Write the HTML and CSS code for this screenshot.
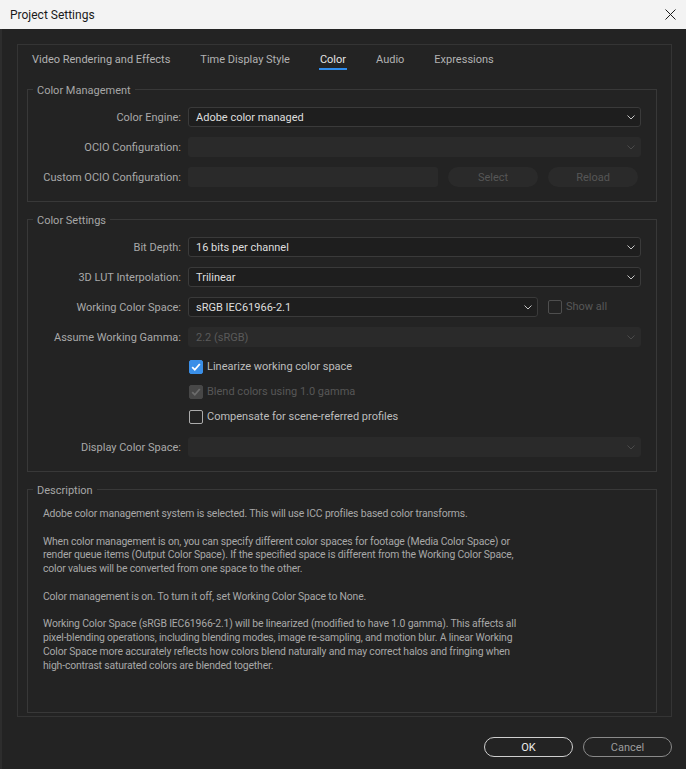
FILE: index.html
```html
<!DOCTYPE html>
<html>
<head>
<meta charset="utf-8">
<title>Project Settings</title>
<link rel="stylesheet" href="styles.css">
</head>
<body>
<div class="titlebar">
  <span class="title">Project Settings</span>
  <svg class="close" viewBox="0 0 11 11" width="11" height="11"><path d="M0.5 0.5 L10.5 10.5 M10.5 0.5 L0.5 10.5" stroke="#1b1b1b" stroke-width="1" fill="none"/></svg>
</div>
<div class="main">
  <div class="panel">
    <div class="tabs">
      <span class="tab">Video Rendering and Effects</span>
      <span class="tab">Time Display Style</span>
      <span class="tab active">Color</span>
      <span class="tab">Audio</span>
      <span class="tab">Expressions</span>
    </div>

    <fieldset class="group g1">
      <legend>Color Management</legend>
      <div class="rows">
        <div class="row">
          <span class="lbl">Color Engine:</span>
          <div class="select"><span>Adobe color managed</span><svg class="chev" viewBox="0 0 8 5" width="8" height="5"><polyline points="0.5,0.5 4,4 7.5,0.5" fill="none" stroke="#c6c6c6" stroke-width="1"/></svg></div>
        </div>
        <div class="row">
          <span class="lbl">OCIO Configuration:</span>
          <div class="select disabled"><span></span><svg class="chev" viewBox="0 0 8 5" width="8" height="5"><polyline points="0.5,0.5 4,4 7.5,0.5" fill="none" stroke="#4a4a4a" stroke-width="1"/></svg></div>
        </div>
        <div class="row">
          <span class="lbl">Custom OCIO Configuration:</span>
          <div class="ctrl-line">
            <div class="input disabled"></div>
            <span class="pill">Select</span>
            <span class="pill">Reload</span>
          </div>
        </div>
      </div>
    </fieldset>

    <fieldset class="group g2">
      <legend>Color Settings</legend>
      <div class="rows">
        <div class="row">
          <span class="lbl">Bit Depth:</span>
          <div class="select"><span>16 bits per channel</span><svg class="chev" viewBox="0 0 8 5" width="8" height="5"><polyline points="0.5,0.5 4,4 7.5,0.5" fill="none" stroke="#c6c6c6" stroke-width="1"/></svg></div>
        </div>
        <div class="row">
          <span class="lbl">3D LUT Interpolation:</span>
          <div class="select"><span>Trilinear</span><svg class="chev" viewBox="0 0 8 5" width="8" height="5"><polyline points="0.5,0.5 4,4 7.5,0.5" fill="none" stroke="#c6c6c6" stroke-width="1"/></svg></div>
        </div>
        <div class="row">
          <span class="lbl">Working Color Space:</span>
          <div class="ctrl-line">
            <div class="select wcs"><span>sRGB IEC61966-2.1</span><svg class="chev" viewBox="0 0 8 5" width="8" height="5"><polyline points="0.5,0.5 4,4 7.5,0.5" fill="none" stroke="#c6c6c6" stroke-width="1"/></svg></div>
            <span class="check-inline"><span class="cb dim"></span><span class="cb-text dimtext">Show all</span></span>
          </div>
        </div>
        <div class="row">
          <span class="lbl">Assume Working Gamma:</span>
          <div class="select disabled"><span class="dimtext">2.2 (sRGB)</span><svg class="chev" viewBox="0 0 8 5" width="8" height="5"><polyline points="0.5,0.5 4,4 7.5,0.5" fill="none" stroke="#4a4a4a" stroke-width="1"/></svg></div>
        </div>
        <div class="checks">
          <div class="check-row"><span class="cb on"><svg viewBox="0 0 14 14" width="14" height="14"><polyline points="3.2,7.2 5.8,9.8 10.8,4" fill="none" stroke="#ffffff" stroke-width="1.8"/></svg></span><span class="cb-text">Linearize working color space</span></div>
          <div class="check-row"><span class="cb on-dis"><svg viewBox="0 0 14 14" width="14" height="14"><polyline points="3.2,7.2 5.8,9.8 10.8,4" fill="none" stroke="#6c6c6c" stroke-width="1.8"/></svg></span><span class="cb-text dimtext">Blend colors using 1.0 gamma</span></div>
          <div class="check-row"><span class="cb"></span><span class="cb-text">Compensate for scene-referred profiles</span></div>
        </div>
        <div class="row">
          <span class="lbl">Display Color Space:</span>
          <div class="select disabled"><span></span><svg class="chev" viewBox="0 0 8 5" width="8" height="5"><polyline points="0.5,0.5 4,4 7.5,0.5" fill="none" stroke="#4a4a4a" stroke-width="1"/></svg></div>
        </div>
      </div>
    </fieldset>

    <fieldset class="group g3">
      <legend>Description</legend>
      <div class="desc">
        <p>Adobe color management system is selected. This will use ICC profiles based color transforms.</p>
        <p>When color management is on, you can specify different color spaces for footage (Media Color Space) or<br>render queue items (Output Color Space). If the specified space is different from the Working Color Space,<br>color values will be converted from one space to the other.</p>
        <p>Color management is on. To turn it off, set Working Color Space to None.</p>
        <p>Working Color Space (sRGB IEC61966-2.1) will be linearized (modified to have 1.0 gamma). This affects all<br>pixel-blending operations, including blending modes, image re-sampling, and motion blur. A linear Working<br>Color Space more accurately reflects how colors blend naturally and may correct halos and fringing when<br>high-contrast saturated colors are blended together.</p>
      </div>
    </fieldset>
  </div>
  <div class="footer">
    <span class="btn ok">OK</span>
    <span class="btn cancel">Cancel</span>
  </div>
</div>
</body>
</html>
```
FILE: styles.css
```css
* { box-sizing: border-box; }
html, body { margin: 0; padding: 0; }
body {
  width: 686px;
  height: 769px;
  overflow: hidden;
  background: #232323;
  font-family: Roboto, "Liberation Sans", sans-serif;
  font-size: 11px;
  color: #a9a9a9;
}
.titlebar {
  height: 29px;
  background: #f3f3f3;
  display: flex;
  align-items: center;
  justify-content: space-between;
  padding: 0 10px 0 10px;
}
.title { font-size: 12px; color: #1a1a1a; }
.close { display: block; }

.main {
  padding: 15px 14px 0 15px;
  border-left: 2px solid #2d2d2d;
  height: 740px;
}
.panel {
  border: 1px solid #343434;
  height: 673px;
  display: flex;
  flex-direction: column;
  padding: 0 14px 3px 9px;
}
.tabs {
  display: flex;
  gap: 28px;
  padding: 8px 0 0 4px;
  height: 25px;
}
.tab {
  padding: 0 1px 1px 1px;
  line-height: 14px;
  border-bottom: 2px solid transparent;
  color: #b2b2b2;
  font-size: 11px;
}
.tab.active { color: #e4e4e4; border-bottom-color: #2f8ded; }

.group {
  margin: 0;
  padding: 0 15px 14px 0;
  border: 1px solid #383838;
  min-width: 0;
}
.g1 { margin-top: 12px; }
.g2 { margin-top: 10px; }
.g3 { margin-top: 10px; flex: 1; }
legend {
  padding: 3px 4px 0 4px;
  margin-left: 5px;
  line-height: 12px;
  font-size: 11px;
  color: #a6a6a6;
}
.rows {
  display: flex;
  flex-direction: column;
  gap: 10px;
  margin-top: 10px;
}
.row {
  display: grid;
  grid-template-columns: 153px 453px;
  column-gap: 7px;
  align-items: center;
  height: 20px;
}
.lbl { text-align: right; color: #a9a9a9; white-space: nowrap; }
.select {
  display: flex;
  align-items: center;
  justify-content: space-between;
  height: 20px;
  background: #1e1e1e;
  border: 1px solid #3a3a3a;
  border-radius: 3px;
  padding: 0 5px 0 7px;
  color: #dedede;
}
.select.disabled { background: #2a2a2a; border-color: #2a2a2a; }
.chev { display: block; }
.ctrl-line { display: flex; align-items: center; gap: 10px; height: 20px; }
.input { width: 250px; height: 20px; border-radius: 3px; }
.input.disabled { background: #2a2a2a; }
.pill {
  width: 90px;
  height: 20px;
  border-radius: 10px;
  background: #2a2a2a;
  color: #565656;
  display: flex;
  align-items: center;
  justify-content: center;
}
.select.wcs { width: 350px; }
.check-inline { display: flex; align-items: center; gap: 4px; }
.dimtext { color: #5a5a5a; }

.checks { display: flex; flex-direction: column; gap: 5px; }
.check-row {
  display: flex;
  align-items: center;
  gap: 4px;
  height: 20px;
  padding-left: 161px;
}
.cb {
  width: 14px;
  height: 14px;
  border: 1.5px solid #acacac;
  border-radius: 2px;
  display: flex;
  align-items: center;
  justify-content: center;
  flex: none;
}
.cb svg { display: block; flex: none; }
.cb.on { background: #3a8fe8; border-color: #3a8fe8; }
.cb.on-dis { background: #474747; border-color: #474747; }
.cb.dim { border-color: #4e4e4e; }
.cb-text { color: #bdbdbd; line-height: 14px; }
.cb-text.dimtext { color: #575757; }

.desc {
  margin-top: 10px;
  padding-left: 15px;
  line-height: 13.8px;
  font-size: 10.4px;
  letter-spacing: -0.16px;
  color: #a8a8a8;
}
.desc p { margin: 0 0 13.8px 0; white-space: nowrap; }

.footer {
  display: flex;
  justify-content: flex-end;
  gap: 10px;
  margin-top: 20px;
}
.btn {
  width: 89px;
  height: 20px;
  border-radius: 10px;
  display: flex;
  align-items: center;
  justify-content: center;
  font-size: 11px;
}
.btn.ok { border: 1px solid #cfcfcf; color: #ececec; }
.btn.cancel { border: 1px solid #8a8a8a; color: #9c9c9c; }
```
